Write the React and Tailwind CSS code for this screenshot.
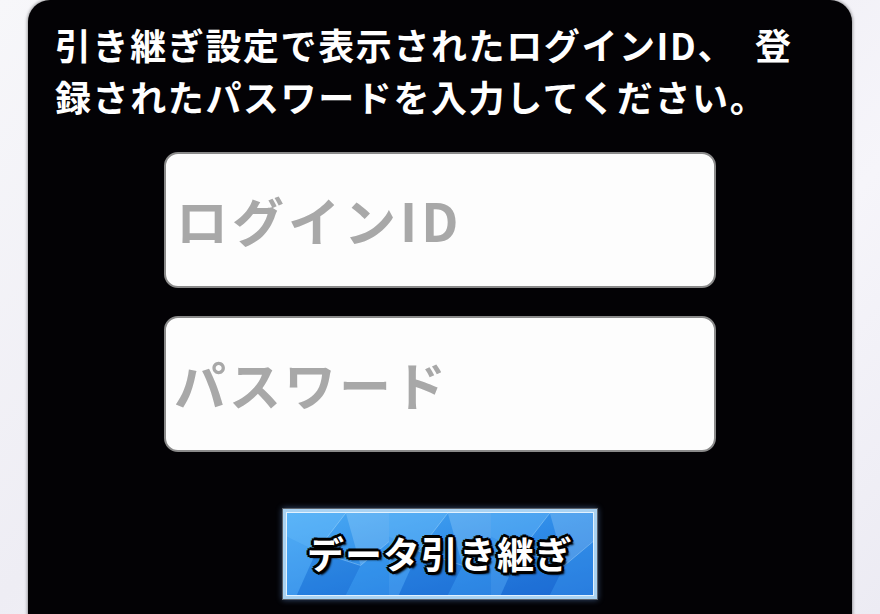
import React from "react";

const jp = { fontFamily: '"Noto Sans CJK JP", "Noto Sans", sans-serif' };

function Crystal() {
  const tile = (ox) => (
    <g key={ox} transform={`translate(${ox},0)`}>
      <polygon points="0,0 60,0 30,40 0,25" fill="#7cc8ff" opacity="0.35" />
      <polygon points="60,0 104,0 104,30 75,55" fill="#bfe6ff" opacity="0.25" />
      <polygon points="30,40 75,55 60,86 10,86" fill="#0d56c4" opacity="0.25" />
      <polygon points="75,55 104,30 104,86 60,86" fill="#3d9cf0" opacity="0.3" />
      <polygon points="0,25 30,40 10,86 0,86" fill="#62b6fa" opacity="0.3" />
      <polyline points="60,0 30,40 75,55 104,30" fill="none" stroke="#c8ecff" strokeWidth="1" opacity="0.35" />
    </g>
  );
  return (
    <svg className="absolute inset-0 h-full w-full" viewBox="0 0 312 86" preserveAspectRatio="none">
      <defs>
        <linearGradient id="bg" x1="0" y1="0" x2="1" y2="1">
          <stop offset="0" stopColor="#4aaaf4" />
          <stop offset="0.5" stopColor="#2f8ce8" />
          <stop offset="1" stopColor="#2170d8" />
        </linearGradient>
      </defs>
      <rect width="312" height="86" fill="url(#bg)" />
      {[0, 104, 208].map((o) => tile(o))}
    </svg>
  );
}

export default function App() {
  return (
    <div
      className="h-[614px] w-[880px] overflow-hidden bg-[linear-gradient(135deg,#f7f7fa,#eeedf4_40%,#f6f5fa_70%,#ecebf3)]"
      style={jp}
    >
      <div className="ml-[28px] flex h-[640px] w-[824px] flex-col rounded-t-[22px] bg-[#030205] pt-[18px] shadow-[0_0_3px_1px_rgba(0,0,0,0.35)]">
        <div className="pl-[27px] text-[36px] font-bold leading-[52px] tracking-[1.6px] text-white">
          <div className="whitespace-nowrap">
            引き継ぎ設定で表示されたログインID、<span className="inline-block w-[20px]"></span>登
          </div>
          <div className="whitespace-nowrap">録されたパスワードを入力してください。</div>
        </div>

        <div className="mt-[30px] flex flex-col items-center gap-[28px]">
          <div className="flex h-[136px] w-[552px] items-center rounded-[14px] border-2 border-[#8a8a8a] bg-[#fdfdfd] pl-[10px]">
            <span className="text-[52px] font-bold tracking-[4px] text-[#a8a8a8]">ログインID</span>
          </div>
          <div className="flex h-[136px] w-[552px] items-center rounded-[14px] border-2 border-[#8a8a8a] bg-[#fdfdfd] pl-[8px]">
            <span className="text-[52px] font-bold tracking-[3px] text-[#a8a8a8]">パスワード</span>
          </div>
        </div>

        <div className="mt-[56px] flex justify-center">
          <div className="h-[92px] w-[316px] border border-[#5a6068] bg-[#a9d2f2] p-[3px] shadow-[0_0_6px_rgba(120,180,255,0.4)]">
            <div className="relative flex h-full w-full items-center justify-center overflow-hidden border border-[#e2f2ff]">
              <Crystal />
              <span className="relative text-[37px] font-bold tracking-[1px] text-white [text-shadow:3px_0_0_#000,-3px_0_0_#000,0_3px_0_#000,0_-3px_0_#000,2px_2px_0_#000,-2px_-2px_0_#000,2px_-2px_0_#000,-2px_2px_0_#000,3px_3px_2px_#000]">
                データ引き継ぎ
              </span>
            </div>
          </div>
        </div>
      </div>
    </div>
  );
}
